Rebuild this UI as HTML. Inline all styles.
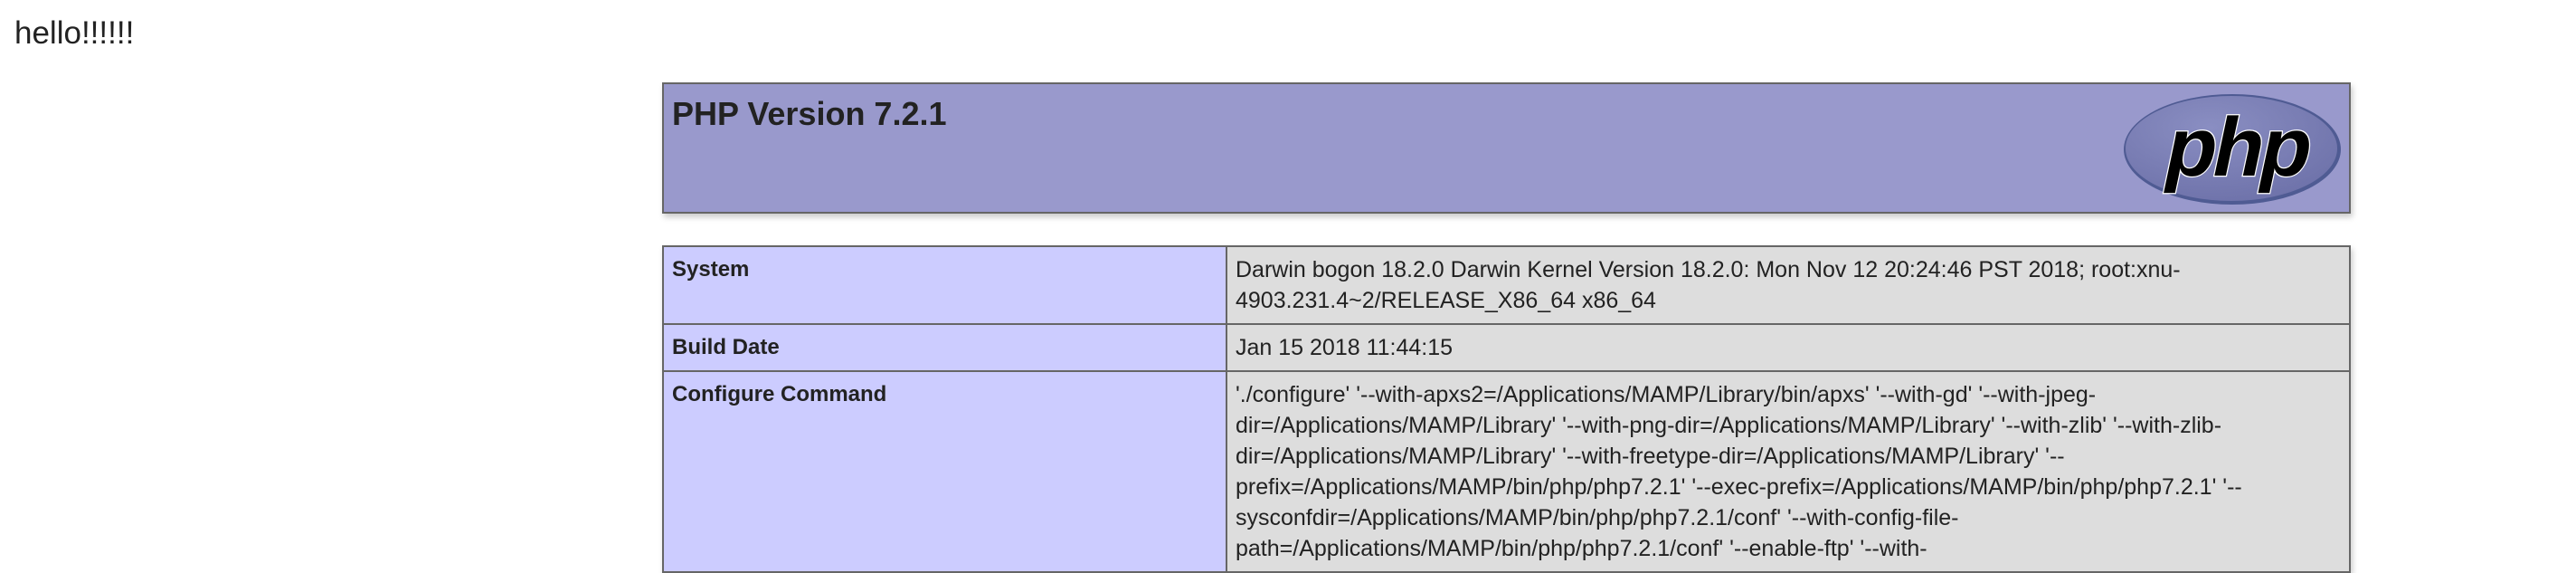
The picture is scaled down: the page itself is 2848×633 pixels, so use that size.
<!DOCTYPE html>
<html><head><meta charset="utf-8"><style>
html,body{margin:0;padding:0;background:#fff;width:2848px;height:626px;overflow:hidden;}
body{font-family:"Liberation Sans",sans-serif;color:#222;}
.hello{position:absolute;left:16px;top:17px;font-size:35px;line-height:40px;}
.hdr{position:absolute;left:732px;top:91px;width:1863px;height:141px;background:#9999cc;border:2px solid #666;box-shadow:2px 4px 6px #ccc;}
.hdr h1{margin:0;position:absolute;left:9px;top:12px;font-size:36px;font-weight:bold;color:#222;}
.logo{position:absolute;left:1612px;top:9px;}
table{position:absolute;left:732px;top:271px;border-collapse:collapse;box-shadow:2px 4px 6px #ccc;width:1867px;}
td{border:2px solid #666;font-size:25px;line-height:34px;padding:8px 9px;vertical-align:top;white-space:nowrap;}
td.e{background:#ccccff;font-weight:bold;font-size:24px;width:603px;}
td.v{background:#dddddd;}
</style></head><body>
<div class="hello">hello!!!!!!</div>
<div class="hdr"><h1>PHP Version 7.2.1</h1>
<svg class="logo" width="244" height="126" viewBox="0 0 244 126">
<defs><radialGradient id="g" cx="0.4" cy="0.3" r="0.8"><stop offset="0" stop-color="#8a8ec2"/><stop offset="1" stop-color="#6c70a8"/></radialGradient></defs>
<ellipse cx="122" cy="63" rx="120" ry="61" fill="#4f5b93"/>
<ellipse cx="121" cy="62" rx="117" ry="58" fill="url(#g)"/>
<g transform="translate(122,92) skewX(-12)">
<text x="0" y="0" text-anchor="middle" font-family="Liberation Sans, sans-serif" font-weight="bold" font-size="92" fill="#000" stroke="#fff" stroke-width="2.5" paint-order="stroke" letter-spacing="-4">php</text></g>
</svg></div>
<table>
<tr><td class="e">System</td><td class="v">Darwin bogon 18.2.0 Darwin Kernel Version 18.2.0: Mon Nov 12 20:24:46 PST 2018; root:xnu-<br>4903.231.4~2/RELEASE_X86_64 x86_64</td></tr>
<tr><td class="e">Build Date</td><td class="v">Jan 15 2018 11:44:15</td></tr>
<tr><td class="e">Configure Command</td><td class="v">'./configure' '--with-apxs2=/Applications/MAMP/Library/bin/apxs' '--with-gd' '--with-jpeg-<br>dir=/Applications/MAMP/Library' '--with-png-dir=/Applications/MAMP/Library' '--with-zlib' '--with-zlib-<br>dir=/Applications/MAMP/Library' '--with-freetype-dir=/Applications/MAMP/Library' '--<br>prefix=/Applications/MAMP/bin/php/php7.2.1' '--exec-prefix=/Applications/MAMP/bin/php/php7.2.1' '--<br>sysconfdir=/Applications/MAMP/bin/php/php7.2.1/conf' '--with-config-file-<br>path=/Applications/MAMP/bin/php/php7.2.1/conf' '--enable-ftp' '--with-</td></tr>
</table>
</body></html>
